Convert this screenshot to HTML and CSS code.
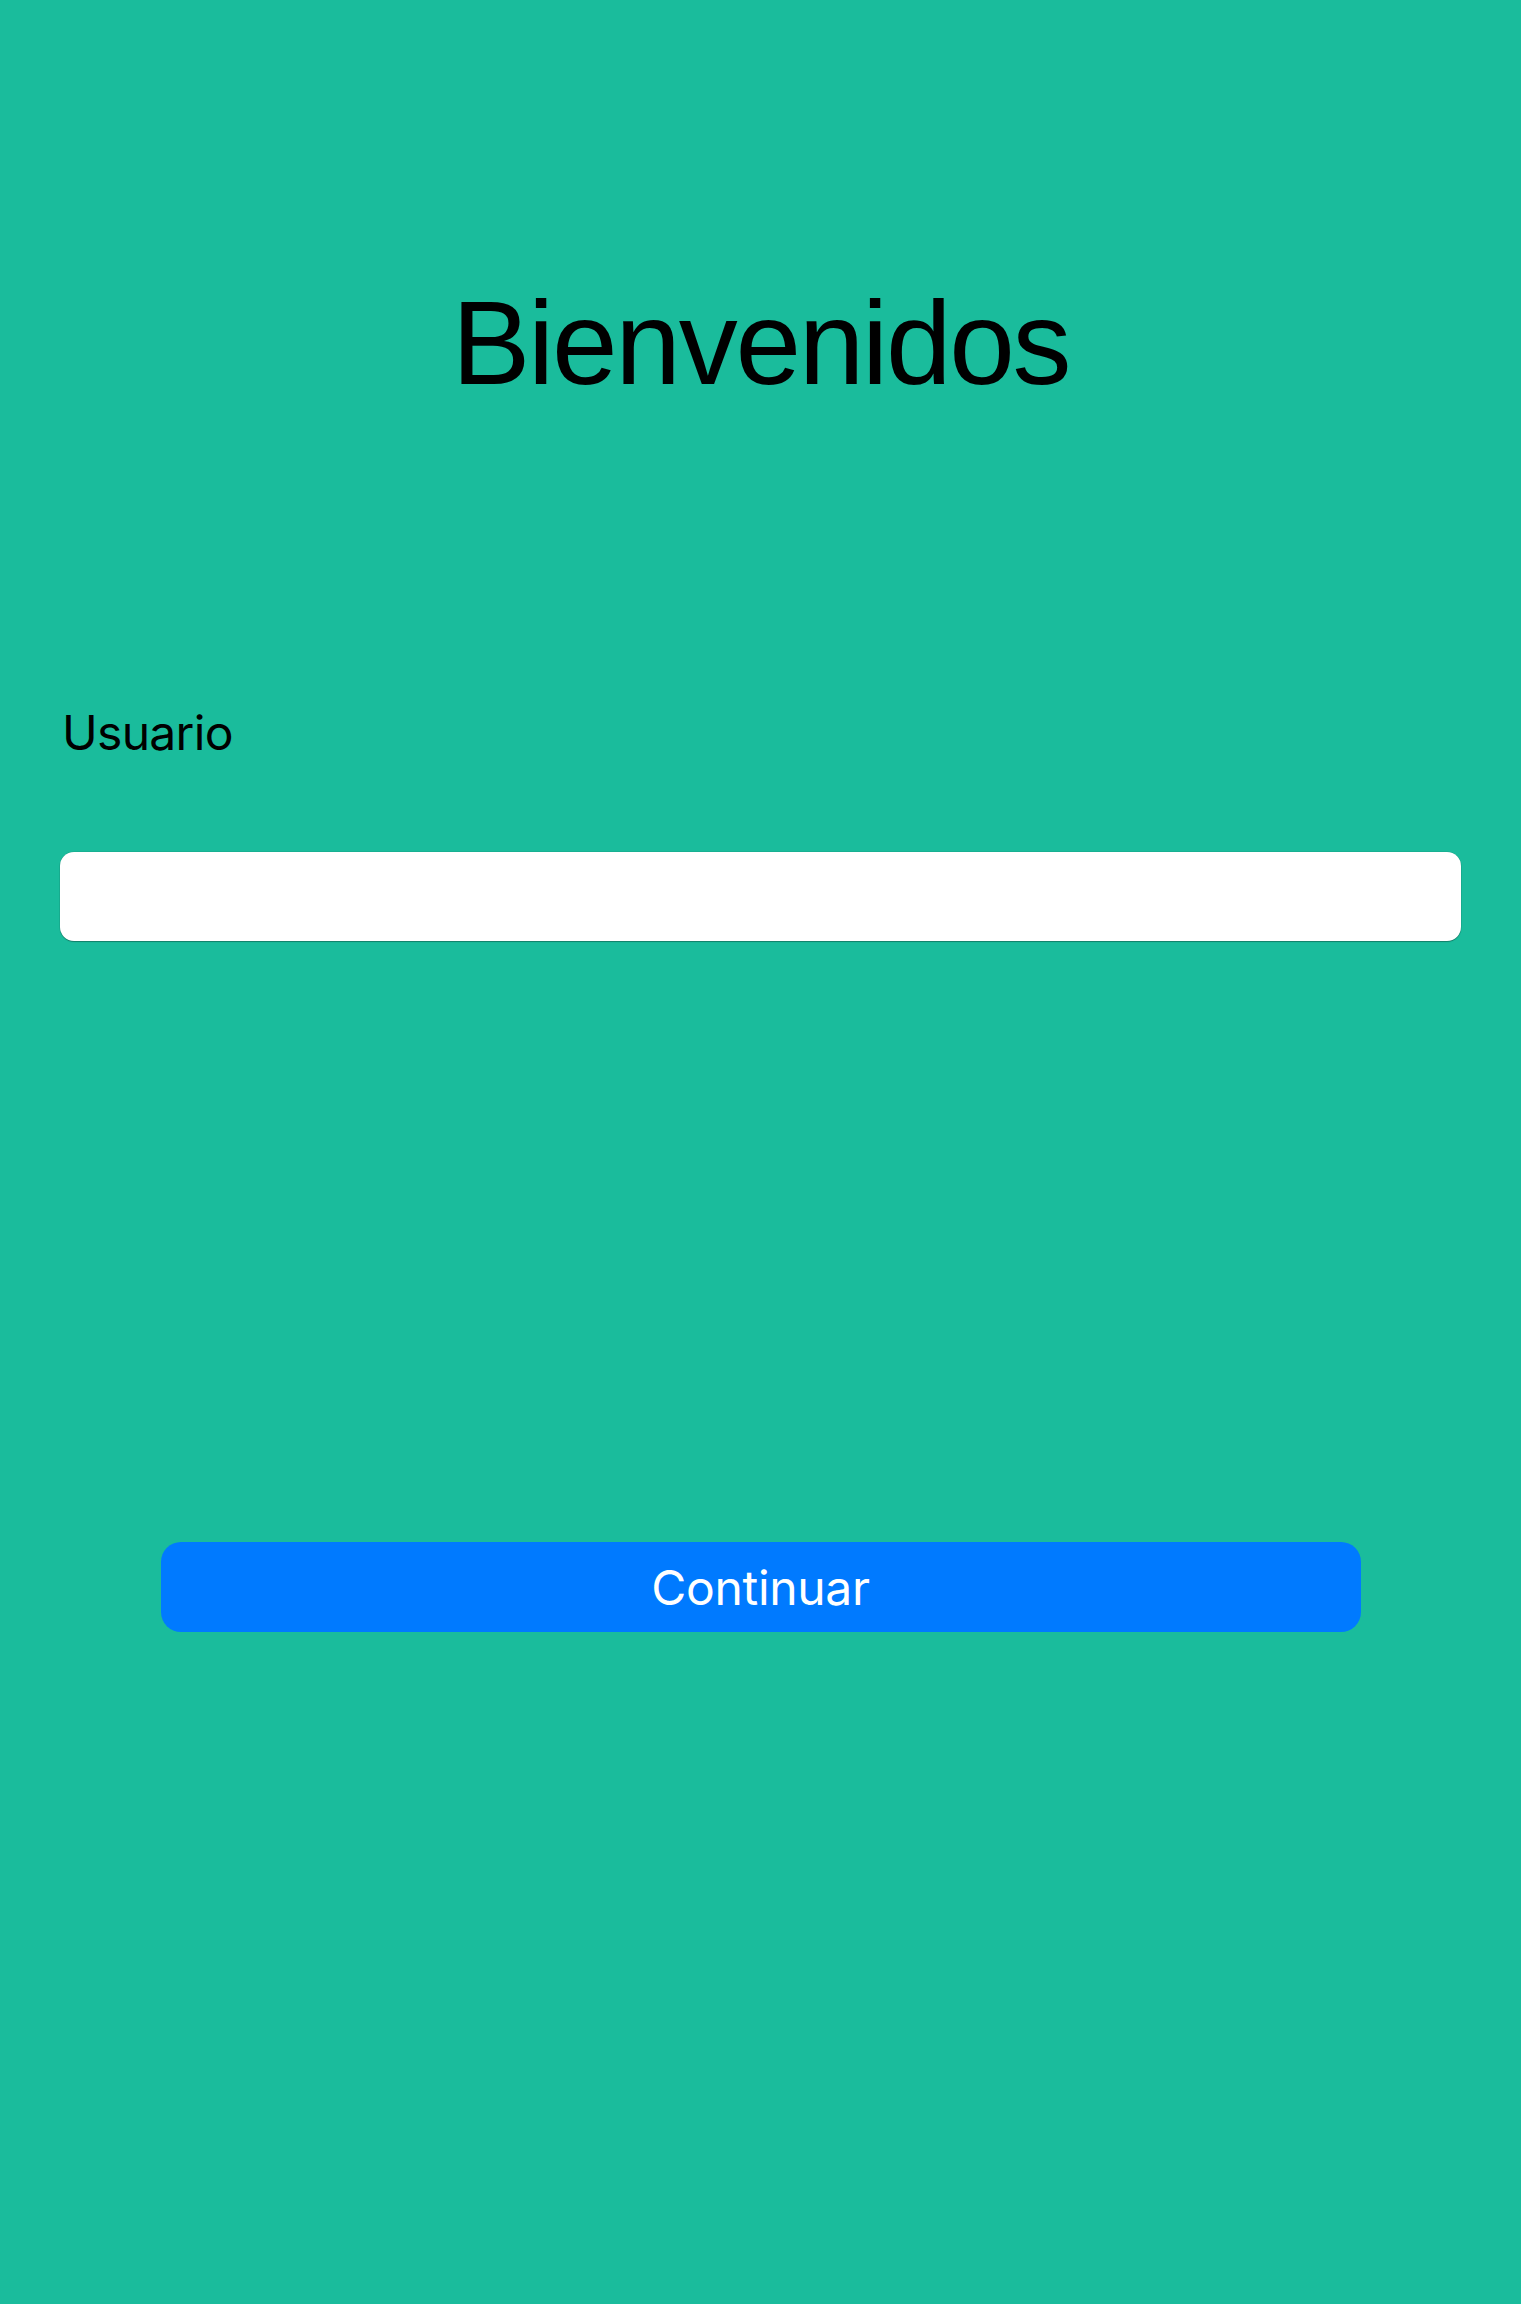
FILE: index.html
```html
<!DOCTYPE html>
<html lang="es">
<head>
<meta charset="utf-8">
<title>Bienvenidos</title>
<link rel="stylesheet" href="styles.css">
</head>
<body>
<main class="screen">
  <h1 class="title">Bienvenidos</h1>
  <form class="form">
    <label class="label" for="usuario">Usuario</label>
    <input class="input" id="usuario" type="text">
    <button class="button" type="button">Continuar</button>
  </form>
</main>
</body>
</html>
```

FILE: styles.css
```css
html, body {
  margin: 0;
  padding: 0;
}
body {
  background: #1abc9c;
}
.screen {
  min-height: 2304px;
  display: flex;
  flex-direction: column;
}
.title {
  margin: 0;
  padding-top: 284px;
  font-family: "Liberation Sans", Arial, sans-serif;
  font-weight: 400;
  font-size: 118px;
  line-height: 118px;
  letter-spacing: -2.3px;
  color: #000;
  text-align: center;
}
.form {
  display: flex;
  flex-direction: column;
  padding: 0 60px;
  margin-top: 301px;
}
.label {
  font-family: Inter, "Noto Sans", sans-serif;
  font-size: 48px;
  line-height: 60px;
  letter-spacing: -0.7px;
  color: #000;
  padding-left: 2px;
}
.input {
  margin-top: 89px;
  height: 89px;
  box-sizing: border-box;
  border: none;
  border-radius: 14px;
  background: #fff;
  box-shadow: 0 1px 1px rgba(0, 0, 0, 0.28), 0 0 0 0.5px rgba(0, 0, 0, 0.12);
  outline: none;
  padding: 0 20px;
  font-family: Inter, sans-serif;
  font-size: 44px;
}
.button {
  align-self: center;
  margin-top: 601px;
  width: 1200px;
  height: 90px;
  border: none;
  border-radius: 20px;
  background: #007aff;
  color: #fff;
  font-family: Inter, "Noto Sans", sans-serif;
  font-size: 48px;
  letter-spacing: -0.3px;
  padding: 0;
}
```
